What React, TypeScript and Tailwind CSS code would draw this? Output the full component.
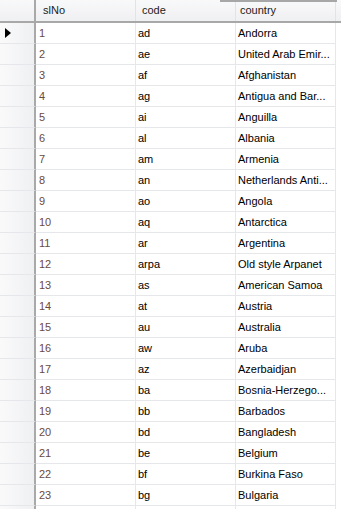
import React from 'react';

const rows: [string, string, string][] = [
  ['1', 'ad', 'Andorra'],
  ['2', 'ae', 'United Arab Emir...'],
  ['3', 'af', 'Afghanistan'],
  ['4', 'ag', 'Antigua and Bar...'],
  ['5', 'ai', 'Anguilla'],
  ['6', 'al', 'Albania'],
  ['7', 'am', 'Armenia'],
  ['8', 'an', 'Netherlands Anti...'],
  ['9', 'ao', 'Angola'],
  ['10', 'aq', 'Antarctica'],
  ['11', 'ar', 'Argentina'],
  ['12', 'arpa', 'Old style Arpanet'],
  ['13', 'as', 'American Samoa'],
  ['14', 'at', 'Austria'],
  ['15', 'au', 'Australia'],
  ['16', 'aw', 'Aruba'],
  ['17', 'az', 'Azerbaidjan'],
  ['18', 'ba', 'Bosnia-Herzego...'],
  ['19', 'bb', 'Barbados'],
  ['20', 'bd', 'Bangladesh'],
  ['21', 'be', 'Belgium'],
  ['22', 'bf', 'Burkina Faso'],
  ['23', 'bg', 'Bulgaria'],
  // next row only peeks in at the bottom edge
  ['', '', ''],
];

export default function App() {
  return (
    <div
      className="relative w-[341px] h-[509px] overflow-hidden bg-white text-[11px] text-black"
      style={{ fontFamily: '"Liberation Sans", Arial, sans-serif' }}
    >
      {/* frame strip over the header */}
      <div className="absolute top-0 left-[220px] w-[117px] h-[2px] bg-[#a7a7a7]" />

      {/* header */}
      <div className="flex h-[23px] border-b-2 border-[#a8a8a8] bg-gradient-to-b from-[#f9f9fa] to-[#eff0f2]">
        <div className="w-[36px] shrink-0 border-r-2 border-[#a9a9a9]" />
        <div className="w-[100px] shrink-0 border-r border-[#e2e3e6] pl-[7px] flex items-center text-[#222]">slNo</div>
        <div className="w-[100px] shrink-0 border-r border-[#e2e3e6] pl-[6px] flex items-center text-[#222]">code</div>
        <div className="w-[100px] shrink-0 border-r border-[#e2e3e6] pl-[4px] flex items-center text-[#222]">country</div>
      </div>

      {rows.map(([no, code, country], i) => (
        <div key={i} className="flex h-[21px]">
          <div className="w-[36px] shrink-0 border-r-2 border-b border-r-[#a9a9a9] border-b-[#e6e7ea] bg-gradient-to-r from-[#fafafb] to-[#eff0f2] flex items-center pl-[5px]">
            {i === 0 && (
              <svg width="6" height="10" viewBox="0 0 6 10">
                <path d="M0 0 L6 5 L0 10 Z" fill="#000" />
              </svg>
            )}
          </div>
          <div className="w-[100px] shrink-0 border-r border-b border-[#e6e7ea] pl-[3px] flex items-center text-[#6b4a3c]">
            {no}
          </div>
          <div className="w-[100px] shrink-0 border-r border-b border-[#e6e7ea] pl-[2px] flex items-center">
            {code}
          </div>
          <div className="w-[100px] shrink-0 border-r border-b border-[#e6e7ea] pl-[2px] flex items-center whitespace-nowrap">
            {country}
          </div>
        </div>
      ))}
    </div>
  );
}
